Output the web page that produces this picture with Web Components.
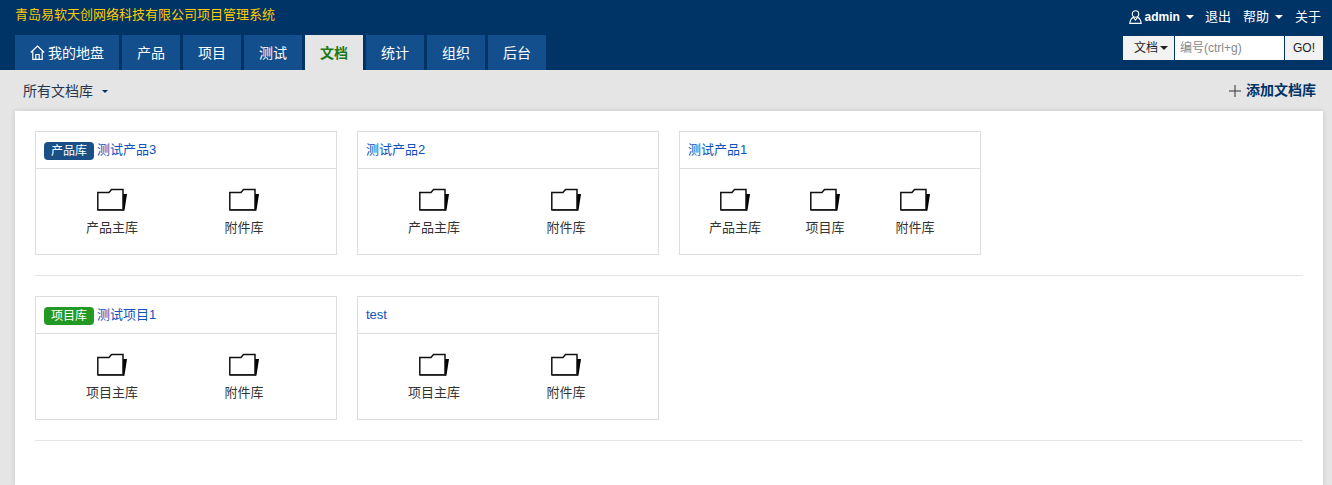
<!DOCTYPE html>
<html lang="zh-CN"><head><meta charset="utf-8"><title>文档</title>
<style>
html,body{margin:0;padding:0;height:485px;overflow:hidden;background:#e5e5e5}
body{font:13px/20px "Liberation Sans","Noto Sans CJK SC",sans-serif;color:#333}
</style></head><body>
<app-header></app-header>
<sub-bar></sub-bar>
<main-panel>
  <lib-row>
    <lib-card kind="product" title-text="测试产品3" items="产品主库,附件库"></lib-card>
    <lib-card title-text="测试产品2" items="产品主库,附件库"></lib-card>
    <lib-card title-text="测试产品1" items="产品主库,项目库,附件库"></lib-card>
  </lib-row>
  <lib-row>
    <lib-card kind="project" title-text="测试项目1" items="项目主库,附件库"></lib-card>
    <lib-card title-text="test" items="项目主库,附件库"></lib-card>
  </lib-row>
</main-panel>
<script>
const def=(n,html)=>customElements.define(n,class extends HTMLElement{
  constructor(){super();this.attachShadow({mode:'open'}).innerHTML=typeof html==='function'?html(this):html}
});
const caret=c=>`<span style="display:inline-block;width:0;height:0;border-left:4px solid transparent;border-right:4px solid transparent;border-top:4px solid ${c};vertical-align:middle"></span>`;
customElements.define('nav-tab',class extends HTMLElement{
  constructor(){super();this.attachShadow({mode:'open'}).innerHTML=`<style>
  :host{display:flex;align-items:center;justify-content:center;box-sizing:border-box;height:35px;min-width:58px;padding:0 15px;background:#134f8c;color:#fff;font-size:14px;line-height:20px;gap:3px}
  :host([active]){background:#e5e5e5;color:#1a7a1a;font-weight:700}
  ::slotted(svg){display:block}
  </style><slot></slot>`}
});
def('app-header',`<style>
:host{display:block;height:70px;box-sizing:border-box;background:#003366;color:#fff;padding:0 9px 0 15px}
.top{display:flex;justify-content:space-between;align-items:flex-start;height:35px}
.brand{color:#ffcc00;font-size:13px;line-height:20px;padding-top:5px}
.user{display:flex;align-items:center;font-size:13px;line-height:20px;padding:7px 2px 0 0}
.user span.i{display:inline-flex;align-items:center}
.nav{display:flex;justify-content:space-between;align-items:flex-start}
.tabs{display:flex;gap:3px}
.search{display:flex;height:24px;margin-top:1px;font-size:12px;line-height:24px;color:#333}
.search>div{background:#f2f2f2;box-sizing:border-box}
.sel{width:51px;padding-left:11px;display:flex;align-items:center;gap:2px;color:#222}
.inp{width:109px;margin-left:1px;background:#fff!important;color:#888;padding-left:5px}
.go{width:38px;margin-left:1px;text-align:center;color:#222}
</style>
<div class="top"><div class="brand">青岛易软天创网络科技有限公司项目管理系统</div>
<div class="user">
<span class="i" style="gap:3px"><svg width="13" height="14" viewBox="0 0 13 14" fill="none" stroke="#fff" stroke-width="1.1"><circle cx="6.500" cy="4" r="3.200"/><path d="M4.500 7C3 8 1 10.500.8 13.400h11.400C12 10.500 10 8 8.500 7M4.500 7.500 6.500 10l2-2.500"/></svg><b style="font-weight:700;font-size:12px">admin</b></span>
<span style="margin:0 11px 0 6px;display:flex">${caret('#fff')}</span>
<span>退出</span><span style="margin-left:12px">帮助</span>
<span style="margin:0 12px 0 6px;display:flex">${caret('#fff')}</span><span>关于</span></div></div>
<div class="nav"><div class="tabs">
<nav-tab><svg width="15" height="15" viewBox="0 0 15 15" fill="none" stroke="#fff" stroke-width="1.200"><path d="M.8 7.500 7.500 1l6.700 6.500M2.800 6.500v7.900h9.400V6.500M5.800 14.400V9.500h3.400v4.900"/></svg>我的地盘</nav-tab>
<nav-tab>产品</nav-tab><nav-tab>项目</nav-tab><nav-tab>测试</nav-tab><nav-tab active>文档</nav-tab><nav-tab>统计</nav-tab><nav-tab>组织</nav-tab><nav-tab>后台</nav-tab></div>
<div class="search"><div class="sel">文档 ${caret('#222')}</div><div class="inp">编号(ctrl+g)</div><div class="go">GO!</div></div></div>`);
def('sub-bar',`<style>
:host{display:flex;justify-content:space-between;align-items:center;box-sizing:border-box;height:41px;padding:1px 16px 0 23px;color:#26374d;font-size:14px}
.l{display:flex;align-items:center;gap:9px}
.r{display:flex;align-items:center;gap:5px;color:#003366;font-weight:700}
.r span{position:relative;top:-1px}
svg{display:block}
</style><div class="l">所有文档库 <span style="display:block;width:0;height:0;border-left:3px solid transparent;border-right:3px solid transparent;border-top:3px solid #003366"></span></div>
<div class="r"><svg width="12" height="12" viewBox="0 0 12 12"><path d="M6 0v12M0 6h12" stroke="#333" fill="none"/></svg><span>添加文档库</span></div>`);
def('main-panel',`<style>
:host{display:block;margin:0 9px 0 15px;height:374px;box-sizing:border-box;background:#fff;padding:20px 20px;box-shadow:0 0 5px rgba(0,0,0,.15)}
</style><slot></slot>`);
def('lib-row',`<style>
:host{display:flex;gap:20px;padding-bottom:20px;margin-bottom:20px;border-bottom:1px solid #e5e5e5}
</style><slot></slot>`);
const FOLDER=`<svg width="30" height="23" viewBox="0 0 30 23"><path d="M26 6h4l-2.600 16.800H26z" fill="#000"/><path d="M.8 4.500H12l2.500-3H26V21.800H.8z" fill="#fff" stroke="#111" stroke-width="1.500"/><path d="M.8 22h25.500" stroke="#222" stroke-width="1.500"/></svg>`;
def('lib-card',el=>{
 const items=(el.getAttribute('items')||'').split(',');
 const w=items.length===3?90:132;
 const kind=el.getAttribute('kind');
 const badge=kind?`<span class="badge ${kind}">${kind==='product'?'产品库':'项目库'}</span>`:'';
 return `<style>
 :host{display:block;box-sizing:border-box;width:302px;height:124px;border:1px solid #ddd}
 .h{height:37px;box-sizing:border-box;border-bottom:1px solid #ddd;display:flex;align-items:center;padding-left:8px;color:#0f52ba;line-height:36px}
 .badge{display:inline-block;width:50px;height:18px;line-height:18px;margin-top:2px;margin-right:3px;text-align:center;border-radius:4px;color:#fff;font-size:12px}
 .product{background:#1a5085}.project{background:#229922}
 .b{display:flex;padding:19px 0 0 10px}
 .it{width:${w}px;display:flex;flex-direction:column;align-items:center;color:#333;gap:7px}
 svg{display:block}
 </style><div class="h">${badge}<span>${el.getAttribute('title-text')}</span></div>
 <div class="b">${items.map(t=>`<div class="it">${FOLDER}<span>${t}</span></div>`).join('')}</div>`});
</script>
</body></html>
